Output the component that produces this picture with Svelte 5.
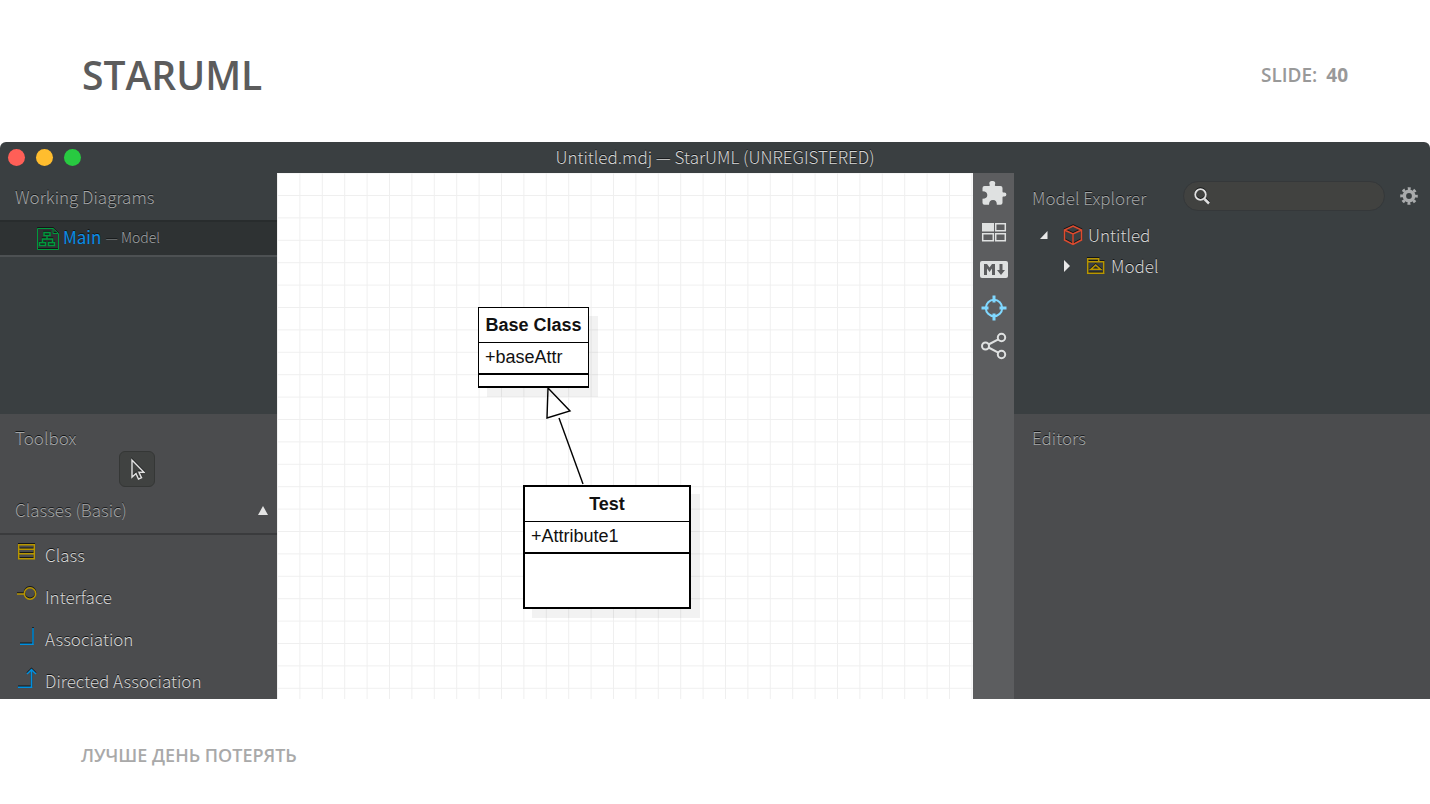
<script>
    const traffic = ['close', 'minimize', 'zoom'];

    const tools = [
        { id: 'class', label: 'Class' },
        { id: 'interface', label: 'Interface' },
        { id: 'association', label: 'Association' },
        { id: 'directed', label: 'Directed Association' }
    ];

    let query = $state('');
</script>

<div class="slide">
    <header class="slide-header">
        <h1>STARUML</h1>
        <p class="slide-number">SLIDE: <b>40</b></p>
    </header>

    <main class="window">
        <div class="titlebar">
            <div class="traffic">
                {#each traffic as name}
                    <button class="light {name}" aria-label={name}></button>
                {/each}
            </div>
            <span class="window-title">Untitled.mdj — StarUML (UNREGISTERED)</span>
        </div>

        <div class="workspace">
            <aside class="sidebar">
                <section class="panel-top">
                    <h2 class="working">Working Diagrams</h2>
                    <a class="diagram" href="#main">
                        <svg class="emboss" width="22" height="22" viewBox="0 0 22 22" fill="none" stroke="#009a3d">
                            <path d="M16 .5H.5v21h21V6M16 .5v5h5.5z" />
                            <path d="M7 4.500h6v3H7zM10 8v3M5.500 14v-3h10v3M2.500 14.500h6v3h-6zM11.500 14.500h6v3h-6z" stroke-width="1.500" />
                        </svg>
                        <span class="diagram-name">Main</span>
                        <small><i>—</i> Model</small>
                    </a>
                </section>
                <section class="panel-bottom">
                    <h2>Toolbox</h2>
                    <button class="pointer" aria-label="Select">
                        <svg class="emboss" width="16" height="22" viewBox="0 0 16 22" fill="none" stroke="#e0e0e0" stroke-width="1.500">
                            <path d="M3 2v17l4-3.500 2.500 5.500 3-1.300-2.500-5.400h5z" />
                        </svg>
                    </button>
                    <div class="group">
                        <h2>Classes (Basic)</h2>
                        <button class="fold" aria-label="Collapse">
                            <svg width="10" height="9" viewBox="0 0 10 9"><path d="M5 0l5 9H0z" fill="#e4e4e4" /></svg>
                        </button>
                    </div>
                    <ul class="tools">
                        {#each tools as tool}
                            <li>
                                <button class="tool">
                                    <svg class="emboss" width="22" height="22" viewBox="0 0 22 22" fill="none" stroke-width="1.500">
                                        {#if tool.id === 'class'}
                                            <path d="M2.700 3.700h15.600v14H2.700zM3 8.300h15M3 12.800h15" stroke="#b89600" />
                                        {:else if tool.id === 'interface'}
                                            <path d="M1 11h7" stroke="#b89600" />
                                            <circle cx="14" cy="10.500" r="5.700" stroke="#b89600" />
                                        {:else if tool.id === 'association'}
                                            <path d="M4 19.300h13V3" stroke="#0090e0" />
                                        {:else}
                                            <path d="M2 20.300h13.500V3M11 7l4.500-4.500L20 7" stroke="#0090e0" />
                                        {/if}
                                    </svg>
                                    <span>{tool.label}</span>
                                </button>
                            </li>
                        {/each}
                    </ul>
                </section>
            </aside>

            <div class="canvas">
                <svg class="grid" width="100%" height="100%">
                    <defs>
                        <pattern id="cell" x="22.400" y="22" width="22.400" height="22.400" patternUnits="userSpaceOnUse">
                            <path d="M.5 0v22.400M0 .5h22.400" stroke="#efefef" fill="none" />
                        </pattern>
                    </defs>
                    <rect width="100%" height="100%" fill="url(#cell)" />
                </svg>
                <svg class="link" width="40" height="100" viewBox="0 0 40 100" stroke="#000" stroke-width="1.400">
                    <path d="M14 31l24 66" />
                    <path d="M3 1L25 24 2 31z" fill="#fff" />
                </svg>
                <div class="uml base">
                    <strong>Base Class</strong>
                    <span>+baseAttr</span>
                    <div class="ops"></div>
                </div>
                <div class="uml test">
                    <strong>Test</strong>
                    <span>+Attribute1</span>
                    <div class="ops"></div>
                </div>
            </div>

            <nav class="toolbar">
                <button aria-label="Extensions">
                    <svg width="28" height="28" viewBox="0 0 28 28" fill="#dfe1e1">
                        <path d="M2.500 8q0-2 2-2H9q1.200 0 .7-1.200C8.600 2.300 10 1 12.300 1s3.700 1.300 2.600 3.800Q14.500 6 15.700 6h4.800q2 0 2 2v3.500q0 1.200 1 1 2.900-.5 2.900 2t-2.900 2q-1-.2-1 1v5.300q0 2-2 2h-3.700q.2-4.800-3.800-4.800t-4 4.800H4.500q-2 0-2-2v-4q4.800 0 4.800-3.800t-4.800-3.800z" />
                    </svg>
                </button>
                <button aria-label="Diagram thumbnails">
                    <svg width="28" height="28" viewBox="0 0 28 28" fill="none" stroke="#dfe1e1" stroke-width="1.500">
                        <path d="M2 5h12v8.500H2z" fill="#dfe1e1" stroke="none" />
                        <path d="M15.700 5.700h9.600v7h-9.600zM2.700 15.700h10.600v7H2.700zM15.700 15.700h9.600v7h-9.600z" />
                    </svg>
                </button>
                <button aria-label="Markdown">
                    <svg width="28" height="28" viewBox="0 0 28 28">
                        <rect y="5" width="28" height="17" rx="2" fill="#dfe1e1" />
                        <path d="M4 19V8h3l2.500 3.500L12 8h3v11h-3v-6.500L9.500 16 7 12.500V19zM19.500 8h3v6H25l-4 5-4-5h2.500z" fill="#5c5d5f" />
                    </svg>
                </button>
                <button aria-label="Focus">
                    <svg width="28" height="28" viewBox="0 0 28 28" fill="none" stroke="#80d8ff">
                        <circle cx="14" cy="14" r="8.200" stroke-width="2" />
                        <path d="M14 1.500v7M14 19.500v7M1.500 14h7M19.500 14h7" stroke-width="3" />
                    </svg>
                </button>
                <button aria-label="Share">
                    <svg width="28" height="28" viewBox="0 0 28 28" fill="none" stroke="#dfe1e1" stroke-width="2">
                        <circle cx="5.500" cy="14" r="3.500" />
                        <circle cx="21.500" cy="5.500" r="3.700" />
                        <circle cx="21.500" cy="22.500" r="3.700" />
                        <path d="M8.500 12.500L18.300 7.400M8.500 15.500L18.300 20.600" />
                    </svg>
                </button>
            </nav>

            <aside class="explorer">
                <section class="panel-top">
                    <div class="explorer-head">
                        <h2>Model Explorer</h2>
                        <label class="search">
                            <svg class="emboss" width="16" height="17" viewBox="0 0 16 17" fill="none" stroke="#e0e0e0">
                                <circle cx="6.500" cy="6.500" r="5.300" stroke-width="1.800" />
                                <path d="M10.500 11l4.500 4.500" stroke-width="2.500" />
                            </svg>
                            <input type="text" aria-label="Search" bind:value={query} />
                        </label>
                        <button class="gear" aria-label="Settings">
                            <svg width="18" height="18" viewBox="0 0 18 18" fill="none" stroke="#a9abac">
                                <circle cx="9" cy="9" r="4.700" stroke-width="3.600" />
                                <circle cx="9" cy="9" r="7.400" stroke-width="2.800" stroke-dasharray="2.900 2.912" stroke-dashoffset="1.450" />
                            </svg>
                        </button>
                    </div>
                    <ul class="tree">
                        <li>
                            <svg class="arrow" width="8" height="10" viewBox="0 0 8 10"><path d="M7.500 1v8H0z" fill="#e8e8e8" /></svg>
                            <svg class="emboss" width="20" height="22" viewBox="0 0 20 22" fill="none" stroke="#dd4b2f" stroke-width="1.500">
                                <path d="M10 2l8.500 4v10L10 20.500 1.500 16V6zM1.500 6l8.500 4 8.500-4M10 10v10.500" />
                            </svg>
                            <span>Untitled</span>
                        </li>
                        <li class="child">
                            <svg class="arrow" width="8" height="12" viewBox="0 0 8 12"><path d="M1 0l6 6-6 6z" fill="#e8e8e8" /></svg>
                            <svg class="emboss" width="20" height="22" viewBox="0 0 20 22" fill="none" stroke="#b89600" stroke-width="1.500">
                                <path d="M1.700 18.300V3.700h11v3M1.700 6.700h16v11.600h-16zM5 14.300h9.500L9.700 10z" />
                            </svg>
                            <span>Model</span>
                        </li>
                    </ul>
                </section>
                <section class="panel-bottom">
                    <h2>Editors</h2>
                </section>
            </aside>
        </div>
    </main>

    <footer class="slide-footer">ЛУЧШЕ ДЕНЬ ПОТЕРЯТЬ</footer>
</div>

<style>
    :global(body) {
        background: #fff;
    }

    .slide {
        display: flex;
        flex-direction: column;
        height: 100vh;
        min-height: 600px;
        font-family: "Open Sans", sans-serif;
    }

    h1, h2, p, ul {
        margin: 0;
        padding: 0;
        list-style: none;
    }

    button {
        padding: 0;
        border: 0;
        background: none;
        font: inherit;
        color: inherit;
    }

    svg {
        display: block;
        flex: none;
    }

    .emboss {
        filter: drop-shadow(0 -1px 0 #141617);
    }

    .slide-header {
        display: flex;
        justify-content: space-between;
        align-items: center;
        height: 142px;
        padding: 8px 82px 0;
        box-sizing: border-box;
        flex: none;
    }

    h1 {
        font-size: 39px;
        font-weight: 600;
        line-height: 48px;
        color: #5c5c5c;
    }

    .slide-number {
        font-size: 19px;
        font-weight: 600;
        color: #999;
        line-height: 24px;
    }

    .slide-number b {
        margin-left: 4px;
        font-weight: 700;
    }

    .slide-footer {
        height: 105px;
        flex: none;
        padding: 0 81px;
        line-height: 112px;
        font-size: 18px;
        font-weight: 600;
        color: #a9a9a9;
    }

    .window {
        flex: 1;
        min-height: 0;
        display: flex;
        flex-direction: column;
        overflow: hidden;
        border-radius: 6px 6px 0 0;
        background: #3a3f41;
        font-family: "Noto Sans CJK SC", sans-serif;
        font-weight: 300;
        font-size: 17px;
        color: #d6d6d6;
        text-shadow: 0 -1px 0 #141617;
    }

    .titlebar {
        display: grid;
        grid-template-columns: 1fr auto 1fr;
        align-items: center;
        height: 31px;
        flex: none;
    }

    .window-title {
        line-height: 29px;
        margin-bottom: 2px;
    }

    .traffic {
        display: flex;
        gap: 11px;
        padding-left: 8px;
    }

    .light {
        width: 17px;
        height: 17px;
        border-radius: 50%;
    }

    .close {
        background: #ff5f57;
    }

    .minimize {
        background: #ffbd2e;
    }

    .zoom {
        background: #28ca41;
    }

    .workspace {
        flex: 1;
        min-height: 0;
        display: grid;
        grid-template-columns: 277px 1fr 41px 416px;
    }

    .sidebar, .explorer {
        display: flex;
        flex-direction: column;
        min-height: 0;
    }

    .panel-top {
        height: 241px;
        flex: none;
    }

    .panel-bottom {
        flex: 1;
        min-height: 0;
        overflow: hidden;
        background: #4b4c4e;
        padding-top: 11px;
    }

    h2 {
        font-size: 17px;
        font-weight: 300;
        line-height: 26px;
        padding-left: 15px;
        color: #a4a6a7;
        white-space: nowrap;
    }

    .working {
        padding-top: 11px;
        padding-bottom: 10px;
    }

    .diagram {
        display: flex;
        align-items: center;
        gap: 4px;
        height: 33px;
        padding-left: 37px;
        border-top: 2px solid #282c2d;
        border-bottom: 2px solid #4d5153;
        background: #2e3233;
        line-height: 30px;
        text-decoration: none;
    }

    .diagram span, .diagram small {
        margin-bottom: 3px;
    }

    .diagram-name {
        color: #0a8ce6;
        font-weight: 400;
    }

    .diagram small {
        font-size: 14px;
        color: #a0a3a4;
    }

    .diagram i {
        font-style: normal;
        color: #707475;
    }

    .pointer {
        display: flex;
        align-items: center;
        justify-content: center;
        width: 36px;
        height: 36px;
        margin: 0 auto 8px 119px;
        border: 1px solid #353736;
        border-radius: 6px;
        background: #404241;
    }

    .group {
        display: flex;
        justify-content: space-between;
        align-items: center;
        height: 30px;
        padding: 0 9px 8px 0;
        border-bottom: 2px solid #3a3b3d;
    }

    .tool {
        display: flex;
        gap: 7px;
        width: 100%;
        height: 42px;
        padding: 6px 0 0 16px;
        text-align: left;
        line-height: 28px;
        text-shadow: inherit;
    }

    .canvas {
        position: relative;
        overflow: hidden;
        background: #fff;
        color: #111;
        text-shadow: none;
        font-family: "Liberation Sans", sans-serif;
        font-weight: 400;
    }

    .grid {
        position: absolute;
        inset: 0;
    }

    .link {
        position: absolute;
        left: 268px;
        top: 214px;
    }

    .uml {
        position: absolute;
        box-sizing: border-box;
        display: flex;
        flex-direction: column;
        border: 2px solid #000;
        background: #fff;
        box-shadow: 9px 9px 0 rgba(0, 0, 0, 0.05);
        font-size: 18px;
    }

    .uml strong {
        line-height: 34px;
        text-align: center;
        white-space: nowrap;
    }

    .uml span {
        padding-left: 6px;
        line-height: 28px;
        padding-bottom: 2px;
        border-top: 1px solid #000;
        border-bottom: 2px solid #000;
    }

    .base {
        left: 201px;
        top: 134px;
        width: 111px;
        height: 81px;
        border-width: 1px;
        border-bottom-width: 2px;
    }

    .test {
        left: 246px;
        top: 312px;
        width: 168px;
        height: 124px;
    }

    .toolbar {
        display: flex;
        flex-direction: column;
        align-items: center;
        gap: 10px;
        padding-top: 7px;
        background: #5c5d5f;
    }

    .toolbar button {
        height: 28px;
    }

    .explorer-head {
        display: flex;
        align-items: center;
        justify-content: space-between;
        padding: 8px 12px 0 3px;
    }

    .search {
        display: flex;
        align-items: center;
        gap: 8px;
        width: 190px;
        height: 28px;
        margin-left: auto;
        margin-right: 15px;
        padding-left: 10px;
        border: 1px solid #35383a;
        border-radius: 15px;
        background: #414240;
    }

    .search input {
        flex: 1;
        min-width: 0;
        border: 0;
        outline: none;
        background: none;
        color: inherit;
        font: inherit;
    }

    .explorer h2 {
        padding-left: 18px;
    }

    .explorer-head h2 {
        padding-left: 15px;
        padding-top: 4px;
    }

    .tree {
        padding: 8px 0 0 26px;
    }

    .tree li {
        display: flex;
        align-items: center;
        height: 31px;
    }

    .tree .child {
        padding-left: 23px;
    }

    .arrow {
        margin-right: 15px;
    }

    .tree span {
        padding-left: 5px;
        padding-bottom: 1px;
    }
</style>
